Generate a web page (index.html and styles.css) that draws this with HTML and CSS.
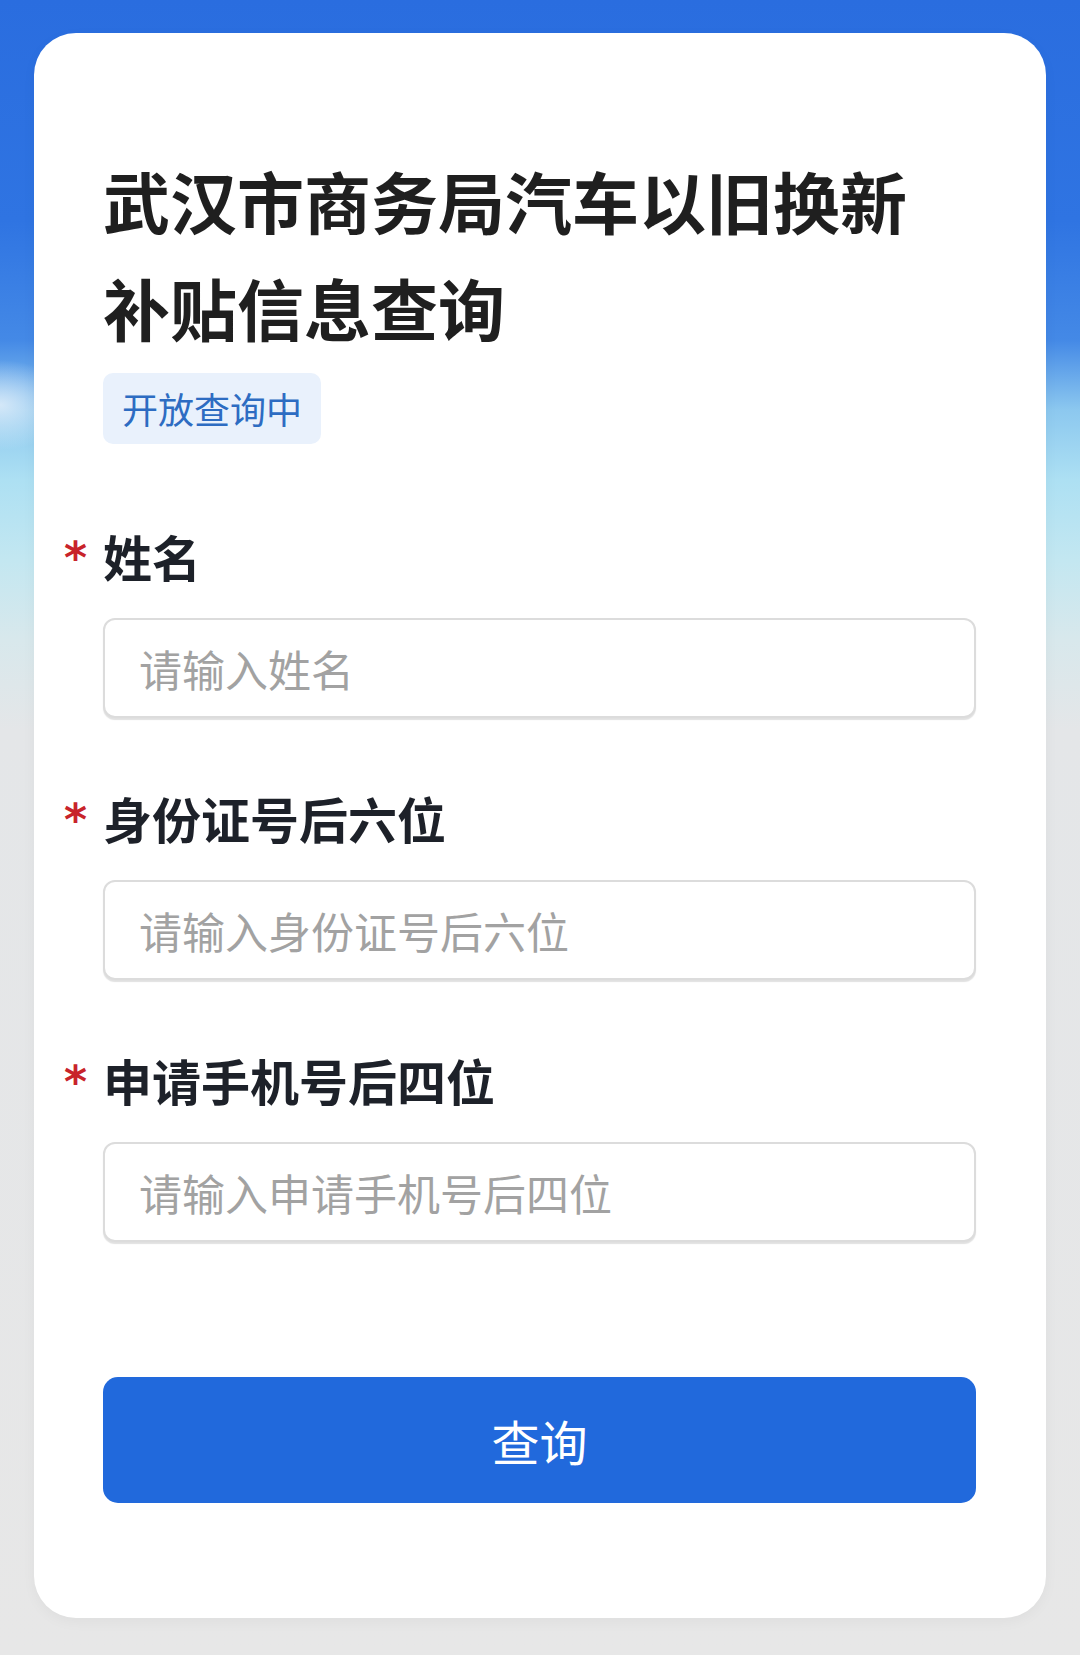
FILE: index.html
```html
<!DOCTYPE html>
<html lang="zh-CN">
<head>
<meta charset="utf-8">
<title>武汉市商务局汽车以旧换新补贴信息查询</title>
<link rel="stylesheet" href="styles.css">
</head>
<body>
<div class="page">
  <main class="card">
    <h1 class="title">武汉市商务局汽车以旧换新<br>补贴信息查询</h1>
    <span class="badge">开放查询中</span>
    <form class="form">
      <div class="field">
        <label class="label"><span class="req">*</span>姓名</label>
        <input class="input" type="text" placeholder="请输入姓名">
      </div>
      <div class="field">
        <label class="label"><span class="req">*</span>身份证号后六位</label>
        <input class="input" type="text" placeholder="请输入身份证号后六位">
      </div>
      <div class="field">
        <label class="label"><span class="req">*</span>申请手机号后四位</label>
        <input class="input" type="text" placeholder="请输入申请手机号后四位">
      </div>
      <button class="btn" type="button">查询</button>
    </form>
  </main>
</div>
</body>
</html>
```

FILE: styles.css
```css
* { box-sizing: border-box; }
html, body { margin: 0; padding: 0; }
body {
  width: 1080px;
  min-height: 1655px;
  font-family: "Noto Sans CJK SC", "Noto Sans", sans-serif;
  background:
    radial-gradient(ellipse 70px 45px at 0px 405px, rgba(226,238,250,0.85), rgba(226,238,250,0) 100%),
    linear-gradient(180deg, #2a6ddf 0px, #2f74e2 220px, #4489e6 340px, #8cc8ef 410px, #ade0f3 480px, #c3e7f1 560px, #d8e8ec 640px, #e4e6e8 730px, #e7e7e7 1655px);
}
.page {
  padding: 33px 34px 37px 34px;
}
.card {
  background: #fff;
  border-radius: 42px;
  padding: 113px 70px 115px 69px;
  display: flex;
  flex-direction: column;
  align-items: flex-start;
  box-shadow: 0 4px 14px rgba(0,0,0,0.04);
}
.title {
  margin: 0;
  font-size: 67px;
  line-height: 107px;
  font-weight: 700;
  color: #1f1f1f;
  letter-spacing: 0;
}
.badge {
  margin-top: 13px;
  height: 71px;
  line-height: 71px;
  padding: 0 19px;
  font-size: 36px;
  color: #2d6cc2;
  background: #e9f1fc;
  border-radius: 10px;
}
.form {
  align-self: stretch;
  display: flex;
  flex-direction: column;
  margin-top: 82px;
}
.field {
  display: flex;
  flex-direction: column;
  margin-bottom: 70px;
}
.field:last-of-type { margin-bottom: 0; }
.label {
  display: flex;
  align-items: flex-start;
  margin-left: -39px;
  height: 60px;
  line-height: 60px;
  font-size: 49px;
  font-weight: 700;
  color: #1d2129;
}
.req {
  width: 39px;
  padding-top: 2px;
  font-family: "DejaVu Sans", sans-serif;
  font-size: 44px;
  font-weight: 700;
  color: #c8232a;
}
.input {
  margin-top: 32px;
  height: 100px;
  width: 100%;
  padding: 0 34px;
  font-family: "Noto Sans CJK SC", "Noto Sans", sans-serif;
  font-size: 43px;
  color: #333;
  background: #fff;
  border: 2px solid #dcdcdc;
  border-radius: 12px;
  box-shadow: 0 2px 1px rgba(0,0,0,0.12);
  outline: none;
}
.input::placeholder { color: #a2a2a2; }
.btn {
  margin-top: 135px;
  height: 126px;
  width: 100%;
  border: none;
  border-radius: 15px;
  background: #2169dc;
  color: #fff;
  font-family: "Noto Sans CJK SC", "Noto Sans", sans-serif;
  font-size: 48px;
  font-weight: 400;
  cursor: pointer;
}
```
